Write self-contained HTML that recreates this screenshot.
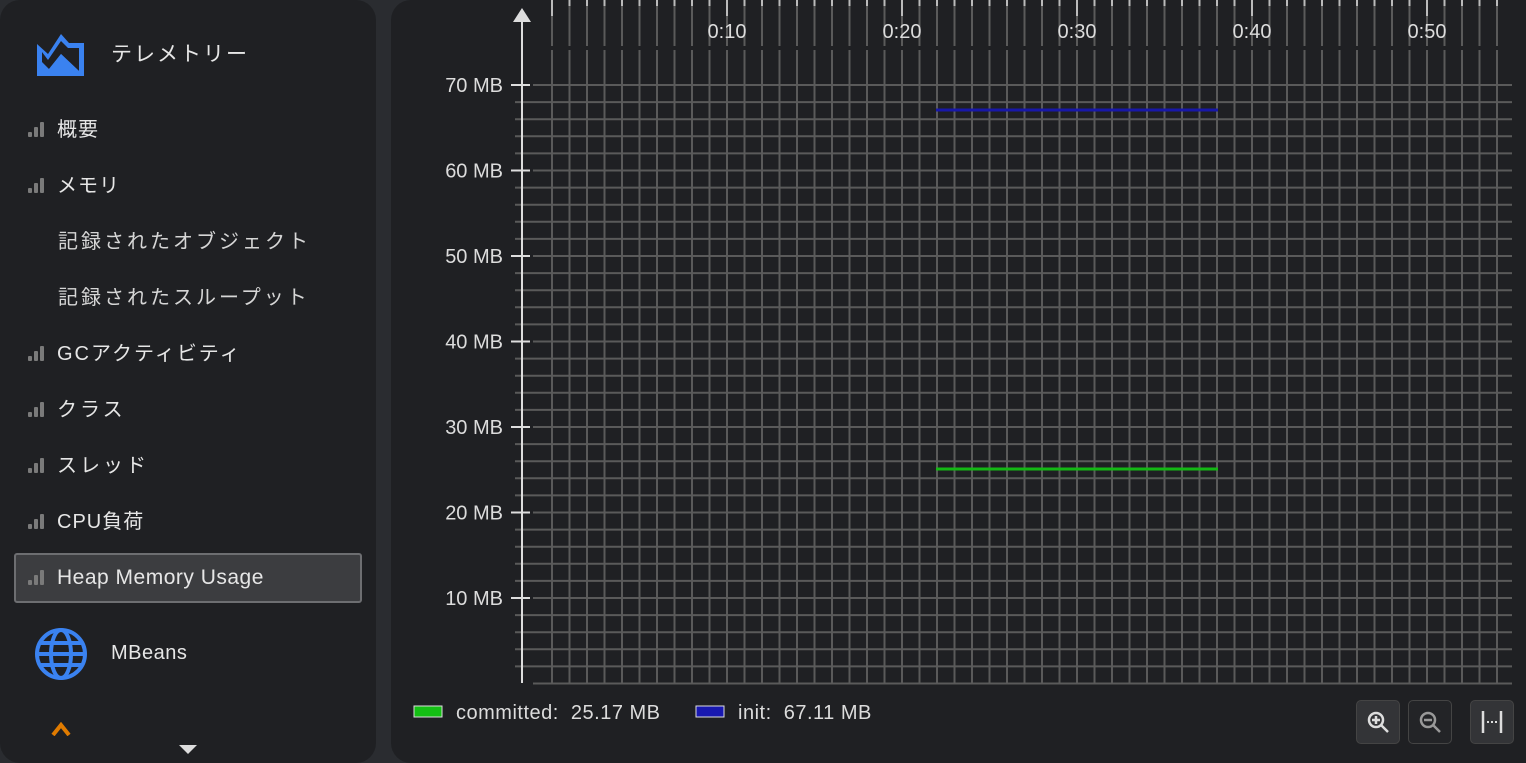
<!DOCTYPE html>
<html><head><meta charset="utf-8"><style>
html,body{margin:0;padding:0;width:1526px;height:763px;overflow:hidden;background:#2a2c30;font-family:"Liberation Sans","Noto Sans CJK JP",sans-serif;}
.side{position:absolute;left:0;top:0;width:376px;height:763px;background:#1f2023;border-radius:20px;}
.main{position:absolute;left:391px;top:0;width:1160px;height:763px;background:#1f2023;border-radius:20px;}
.item{position:absolute;left:28px;height:30px;font-size:20px;color:#e6e6e6;line-height:30px;letter-spacing:1px;white-space:nowrap}
.item .bars{display:inline-block;width:18px;height:15px;position:relative;margin-right:11px;vertical-align:-1px}
.bars i{position:absolute;bottom:0;width:4px;background:#7a7a7a;border-radius:1px}
.sub{position:absolute;left:58px;font-size:20px;color:#d6d6d6;line-height:30px;letter-spacing:3px;white-space:nowrap}
.sel{position:absolute;left:14px;top:553px;width:344px;height:46px;background:#3c3d40;border:2px solid #6d6e71;border-radius:3px}
.btn{position:absolute;top:700px;width:42px;height:42px;border:1px solid #444;border-radius:5px;background:#2c2d30}
</style></head><body>
<div class="side">
<svg style="position:absolute;left:36px;top:32px" width="50" height="46" viewBox="0 0 50 46"><path d="M1 12 L12 22 L25 2 L33 11 L48 11 L48 44 L1 44 Z" fill="#3a82f0"/><path d="M6 20 L12 28 L25 9 L32 16 L43 16 L43 39 L25 22 L13 37 L6 30 Z" fill="#1f2023"/><path d="M6 40 L13 37 L25 22 L43 39 L43 40 Z" fill="#3a82f0"/></svg>
<div style="position:absolute;left:111px;top:38px;font-size:21px;color:#e6e6e6;letter-spacing:2px">テレメトリー</div>
<div class="item" style="top:115px"><span class="bars"><i style="left:0;height:5px"></i><i style="left:6px;height:10px"></i><i style="left:12px;height:15px"></i></span>概要</div>
<div class="item" style="top:171px"><span class="bars"><i style="left:0;height:5px"></i><i style="left:6px;height:10px"></i><i style="left:12px;height:15px"></i></span>メモリ</div>
<div class="sub" style="top:227px">記録されたオブジェクト</div>
<div class="sub" style="top:283px">記録されたスループット</div>
<div class="item" style="top:339px;letter-spacing:2px"><span class="bars"><i style="left:0;height:5px"></i><i style="left:6px;height:10px"></i><i style="left:12px;height:15px"></i></span>GCアクティビティ</div>
<div class="item" style="top:395px;letter-spacing:3px"><span class="bars"><i style="left:0;height:5px"></i><i style="left:6px;height:10px"></i><i style="left:12px;height:15px"></i></span>クラス</div>
<div class="item" style="top:451px;letter-spacing:3px"><span class="bars"><i style="left:0;height:5px"></i><i style="left:6px;height:10px"></i><i style="left:12px;height:15px"></i></span>スレッド</div>
<div class="item" style="top:507px"><span class="bars"><i style="left:0;height:5px"></i><i style="left:6px;height:10px"></i><i style="left:12px;height:15px"></i></span>CPU負荷</div>
<div class="sel"></div>
<div class="item" style="top:563px;font-size:21px;letter-spacing:0.5px"><span class="bars"><i style="left:0;height:5px"></i><i style="left:6px;height:10px"></i><i style="left:12px;height:15px"></i></span>Heap Memory Usage</div>
<svg style="position:absolute;left:34px;top:627px" width="54" height="54" viewBox="0 0 54 54" fill="none" stroke="#3a82f0" stroke-width="4"><circle cx="27" cy="27" r="24"/><ellipse cx="27" cy="27" rx="10" ry="24"/><line x1="3" y1="27" x2="51" y2="27"/><line x1="7" y1="16" x2="47" y2="16"/><line x1="7" y1="38" x2="47" y2="38"/></svg>
<div style="position:absolute;left:111px;top:642px;font-size:20px;color:#e6e6e6;letter-spacing:0.5px">MBeans</div>
<svg style="position:absolute;left:51px;top:722px" width="20" height="14"><path d="M2 13 L10 3 L18 13" stroke="#e07b00" stroke-width="4" fill="none"/></svg>
<svg style="position:absolute;left:179px;top:745px" width="18" height="10"><path d="M0 0 L18 0 L9 9Z" fill="#ddd"/></svg>
</div>
<div class="main"></div>
<svg style="position:absolute;left:0;top:0" width="1526" height="763">
<g id="g"></g>
</svg>
<script>
var s='';
for(var i=0;i<=55;i++){var x=552+i*17.5;if(x>1512)break;var maj=(i%10==0);
s+='<line x1="'+x+'" y1="4" x2="'+x+'" y2="46" stroke="#5a5a5a" stroke-width="2"/>';
s+='<line x1="'+x+'" y1="0" x2="'+x+'" y2="'+(maj?16:6)+'" stroke="#bbb" stroke-width="2"/>';
s+='<line x1="'+x+'" y1="50" x2="'+x+'" y2="683" stroke="#5a5a5a" stroke-width="2"/>';}
for(var j=0;j<=35;j++){var y=85+j*17.1;if(y>684)break;
s+='<line x1="'+(j%5==0?533:515)+'" y1="'+y+'" x2="1512" y2="'+y+'" stroke="#5a5a5a" stroke-width="2"/>';
if(j%5==0&&j<35){s+='<line x1="511" y1="'+y+'" x2="530" y2="'+y+'" stroke="#ddd" stroke-width="2"/>';
s+='<text x="503" y="'+(y+7)+'" text-anchor="end" font-size="20" fill="#dcdcdc" font-family="Liberation Sans,sans-serif">'+(70-j/5*10)+' MB</text>';}}
var L=['0:10','0:20','0:30','0:40','0:50'];
for(var k=0;k<5;k++){s+='<text x="'+(727+k*175)+'" y="38" text-anchor="middle" font-size="20" fill="#dcdcdc" font-family="Liberation Sans,sans-serif">'+L[k]+'</text>';}
s+='<line x1="522" y1="20" x2="522" y2="683" stroke="#ddd" stroke-width="2"/><path d="M513 22 L522 8 L531 22Z" fill="#ddd"/>';
s+='<line x1="936" y1="110" x2="1218" y2="110" stroke="#1818a8" stroke-width="3"/>';
s+='<line x1="936" y1="469" x2="1218" y2="469" stroke="#14b814" stroke-width="3"/>';
s+='<rect x="414" y="706" width="28" height="11" fill="#14c014" stroke="#ddd" stroke-width="1"/><text x="456" y="719" font-size="20" fill="#dcdcdc" font-family="Liberation Sans,sans-serif" xml:space="preserve" letter-spacing="0.5">committed:  25.17 MB</text>';
s+='<rect x="696" y="706" width="28" height="11" fill="#1818b0" stroke="#ddd" stroke-width="1"/><text x="738" y="719" font-size="20" fill="#dcdcdc" font-family="Liberation Sans,sans-serif" xml:space="preserve" letter-spacing="0.5">init:  67.11 MB</text>';
document.getElementById('g').innerHTML=s;
</script>
<div class="btn" style="left:1356px;background:#333437"><svg width="42" height="42"><circle cx="19" cy="19" r="7" stroke="#ddd" stroke-width="2.5" fill="none"/><path d="M15 19h8M19 15v8" stroke="#ddd" stroke-width="2.5"/><path d="M24 24l7 7" stroke="#ddd" stroke-width="2.5"/></svg></div>
<div class="btn" style="left:1408px;background:#232427"><svg width="42" height="42"><circle cx="19" cy="19" r="7" stroke="#999" stroke-width="2.5" fill="none"/><path d="M15 19h8" stroke="#999" stroke-width="2.5"/><path d="M24 24l7 7" stroke="#999" stroke-width="2.5"/></svg></div>
<div class="btn" style="left:1470px;background:#333437"><svg width="42" height="42"><path d="M12 10v22M30 10v22" stroke="#ddd" stroke-width="2.5"/><path d="M16 21h2M20 21h2M24 21h2" stroke="#ddd" stroke-width="2"/></svg></div>
</body></html>
